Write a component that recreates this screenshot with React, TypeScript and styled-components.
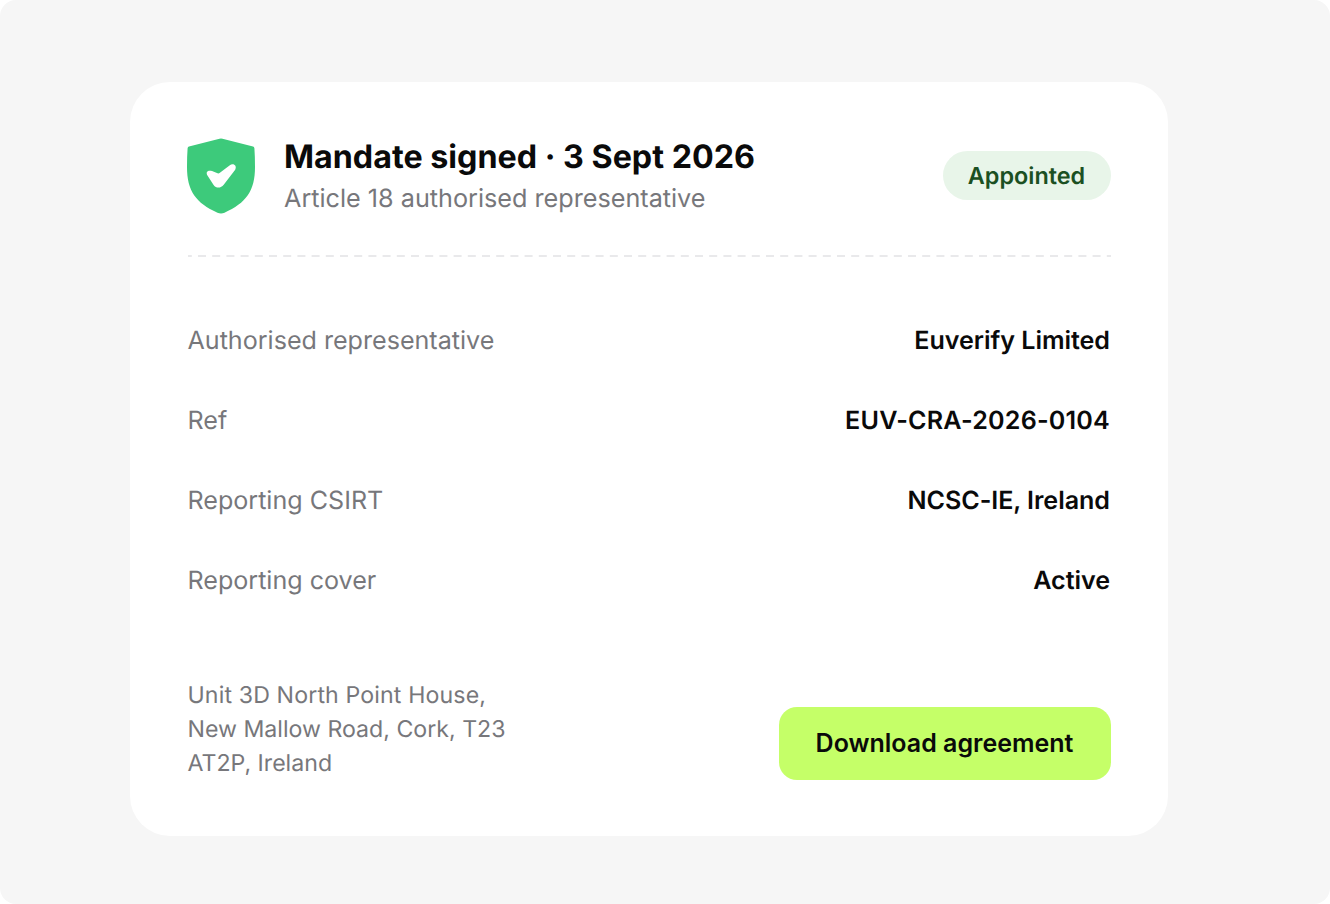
import React from "react";
import styled, { createGlobalStyle } from "styled-components";

const GlobalStyle = createGlobalStyle`
  *, *::before, *::after { box-sizing: border-box; }
  body {
    margin: 0;
    background: #fff;
    font-family: Inter, "Liberation Sans", sans-serif;
    text-rendering: geometricPrecision;
  }
`;
const Stage = styled.main`
  width: 1330px;
  height: 904px;
  padding: 82px 162px 68px 130px;
  border-radius: 16px;
  background: #f6f6f6;
`;
const Card = styled.section`
  display: flex;
  flex-direction: column;
  height: 754px;
  padding: 56px 57px 56.5px 57px;
  border-radius: 40px;
  background: #fff;
`;
const Header = styled.header`
  display: flex;
  align-items: center;
  height: 76px;
`;
const Shield = styled.svg`
  display: block;
  flex: none;
  width: 68px;
  height: 76px;
  margin-right: 29px;
`;
const Heading = styled.div`
  flex: 1;
  padding-top: 4px;
`;
const Title = styled.h1`
  margin: 0;
  font-size: 32.25px;
  line-height: 42px;
  font-weight: 700;
  color: #0a0a0a;
  white-space: nowrap;
`;
const Subtitle = styled.p`
  margin: 0;
  font-size: 25.2px;
  line-height: 43px;
  color: #77777b;
`;
const Badge = styled.span`
  display: flex;
  align-items: center;
  justify-content: center;
  width: 168px;
  height: 49px;
  margin-bottom: 1px;
  padding-right: 1px;
  border-radius: 25px;
  background: #e8f5e9;
  color: #1b5022;
  font-size: 23.4px;
  font-weight: 600;
`;
const Divider = styled.svg`
  display: block;
  flex: none;
  width: 100%;
  height: 2px;
  margin-top: 41px;
`;
const Details = styled.dl`
  margin: 44px 0 0;
`;
const Row = styled.div`
  display: flex;
  align-items: center;
  justify-content: space-between;
  height: 80px;
  padding: 0 1px 0 0.5px;
  font-size: 25.1px;
`;
const Label = styled.dt`
  color: #77777b;
`;
const Value = styled.dd<{ $spacing?: string }>`
  margin: 0;
  font-weight: 600;
  letter-spacing: ${({ $spacing }) => $spacing ?? "-0.04px"};
  color: #0a0a0a;
`;
const Footer = styled.footer`
  display: flex;
  align-items: flex-end;
  justify-content: space-between;
  margin-top: auto;
`;
const Address = styled.address`
  padding-left: 0.5px;
  font-style: normal;
  font-size: 23.15px;
  line-height: 34px;
  color: #77777b;
`;
const AddressLine = styled.span<{ $spacing?: string }>`
  display: block;
  letter-spacing: ${({ $spacing }) => $spacing ?? "normal"};
`;
const Button = styled.button`
  width: 332px;
  height: 73px;
  padding: 0 1px 0 0;
  border: 0;
  border-radius: 18px;
  background: #c5ff68;
  color: #0a0a0a;
  font: 600 25px Inter, sans-serif;
`;

const details = [
  { label: "Authorised representative", value: "Euverify Limited" },
  { label: "Ref", value: "EUV-CRA-2026-0104", spacing: "0.2px" },
  { label: "Reporting CSIRT", value: "NCSC-IE, Ireland" },
  { label: "Reporting cover", value: "Active" },
];

export default function App() {
  return (
    <>
      <GlobalStyle />
      <Stage>
        <Card>
          <Header>
            <Shield viewBox="0 0 68 76">
              <path
                d="M32.5 .8 Q34 .2 35.5 .8 L66 8.6 Q67.2 9 67.4 10.2 Q68 18 68 29 C68 53 59 65 37.5 74.7 Q34 76.3 30.5 74.7 C9 65 0 53 0 29 Q0 18 .6 10.2 Q.8 9 2 8.6Z"
                fill="#3dca7b"
              />
              <path
                d="M20.3 37.2 C18.4 33.4 21.5 32 25 33.1 L30.6 35.3 Q31.8 35.7 32.9 34.7 L42.5 27.5 C46.2 24.6 50.4 27.5 48.2 31.8 L36.7 46.8 C33.8 50.5 29.2 50.5 26.6 47Z"
                fill="#fff"
              />
            </Shield>
            <Heading>
              <Title>Mandate signed · 3 Sept 2026</Title>
              <Subtitle>Article 18 authorised representative</Subtitle>
            </Heading>
            <Badge>Appointed</Badge>
          </Header>
          <Divider>
            <line x1="1" y1="1" x2="924" y2="1" stroke="#e9e9eb" strokeWidth="2" strokeDasharray="8 6.2" strokeDashoffset="4.2" />
          </Divider>
          <Details>
            {details.map(({ label, value, spacing }) => (
              <Row key={label}>
                <Label>{label}</Label>
                <Value $spacing={spacing}>{value}</Value>
              </Row>
            ))}
          </Details>
          <Footer>
            <Address>
              <AddressLine $spacing="0.13px">Unit 3D North Point House,</AddressLine>
              <AddressLine>New Mallow Road, Cork, T23</AddressLine>
              <AddressLine>AT2P, Ireland</AddressLine>
            </Address>
            <Button type="button">Download agreement</Button>
          </Footer>
        </Card>
      </Stage>
    </>
  );
}
